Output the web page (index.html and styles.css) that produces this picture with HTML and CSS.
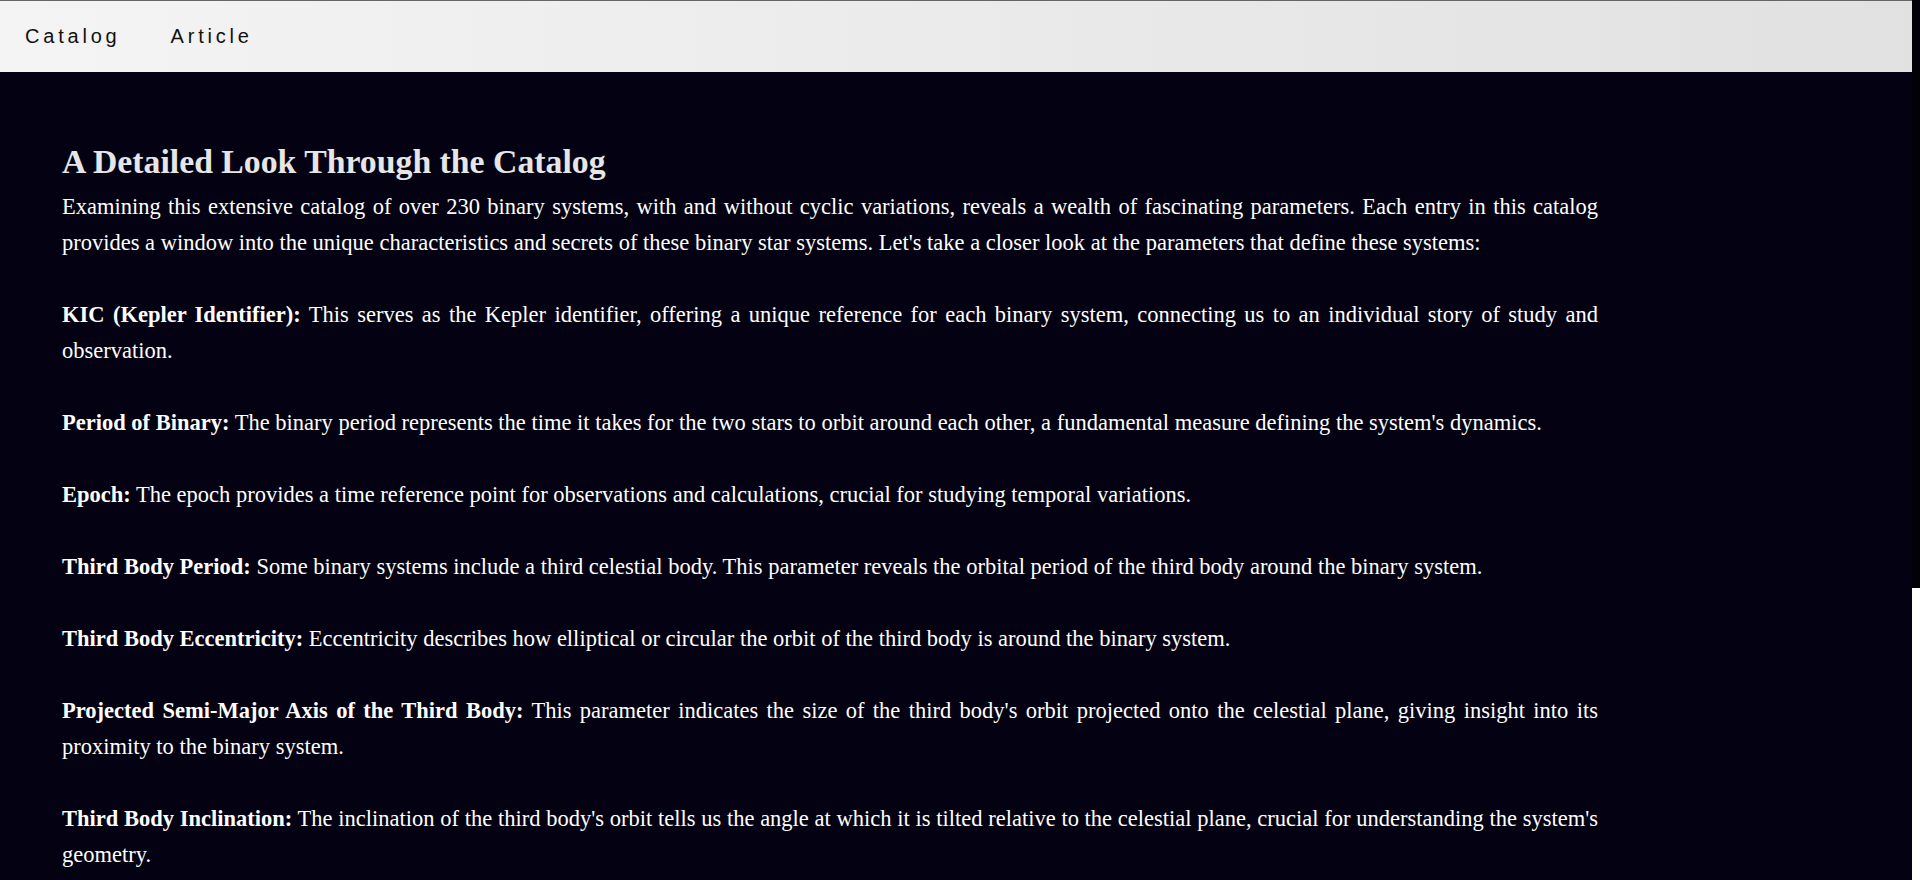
FILE: index.html
```html
<!DOCTYPE html>
<html lang="en">
<head>
<meta charset="utf-8">
<title>A Detailed Look Through the Catalog</title>
<link rel="stylesheet" href="styles.css">
</head>
<body>
<div class="page">
  <header class="topbar">
    <nav class="nav">
      <a class="nav-link" href="#">Catalog</a>
      <a class="nav-link" href="#">Article</a>
    </nav>
  </header>
  <main class="article">
    <h2 class="article-title">A Detailed Look Through the Catalog</h2>
    <p class="para">Examining this extensive catalog of over 230 binary systems, with and without cyclic variations, reveals a wealth of fascinating parameters. Each entry in this catalog provides a window into the unique characteristics and secrets of these binary star systems. Let's take a closer look at the parameters that define these systems:</p>
    <p class="para"><strong>KIC (Kepler Identifier):</strong> This serves as the Kepler identifier, offering a unique reference for each binary system, connecting us to an individual story of study and observation.</p>
    <p class="para"><strong>Period of Binary:</strong> The binary period represents the time it takes for the two stars to orbit around each other, a fundamental measure defining the system's dynamics.</p>
    <p class="para"><strong>Epoch:</strong> The epoch provides a time reference point for observations and calculations, crucial for studying temporal variations.</p>
    <p class="para"><strong>Third Body Period:</strong> Some binary systems include a third celestial body. This parameter reveals the orbital period of the third body around the binary system.</p>
    <p class="para"><strong>Third Body Eccentricity:</strong> Eccentricity describes how elliptical or circular the orbit of the third body is around the binary system.</p>
    <p class="para"><strong>Projected Semi-Major Axis of the Third Body:</strong> This parameter indicates the size of the third body's orbit projected onto the celestial plane, giving insight into its proximity to the binary system.</p>
    <p class="para"><strong>Third Body Inclination:</strong> The inclination of the third body's orbit tells us the angle at which it is tilted relative to the celestial plane, crucial for understanding the system's geometry.</p>
  </main>
</div>
<div class="scrollbar"><div class="scrollbar-thumb"></div></div>
</body>
</html>
```
FILE: styles.css
```css
html {
  background: #040212;
}
body {
  margin: 0;
  background: #040212;
  font-family: "Liberation Serif", "Times New Roman", serif;
}
.page {
  margin-right: 8px;
}
.topbar {
  height: 71px;
  border-top: 1px solid #666666;
  background: linear-gradient(to right, #f4f4f4, #e1e1e1);
  display: flex;
  align-items: center;
}
.nav {
  display: flex;
}
.nav-link {
  padding: 0 25px;
  font-family: "Liberation Sans", Arial, sans-serif;
  font-size: 20px;
  letter-spacing: 3.8px;
  color: #111111;
  text-decoration: none;
}
.article {
  width: 1536px;
  padding: 71px 0 120px 62px;
  font-size: 22.5px;
}
.article-title {
  margin: 0 0 8px;
  font-size: 1.5em;
  font-weight: bold;
  color: #e6e6e6;
}
.para {
  margin: 0 0 36px;
  line-height: 36px;
  color: #ffffff;
  text-align: justify;
}
.para strong {
  font-weight: bold;
}
.scrollbar {
  position: fixed;
  top: 0;
  right: 0;
  width: 8px;
  height: 100%;
  background: #ffffff;
}
.scrollbar-thumb {
  height: 588px;
  background: #020108;
}
```
